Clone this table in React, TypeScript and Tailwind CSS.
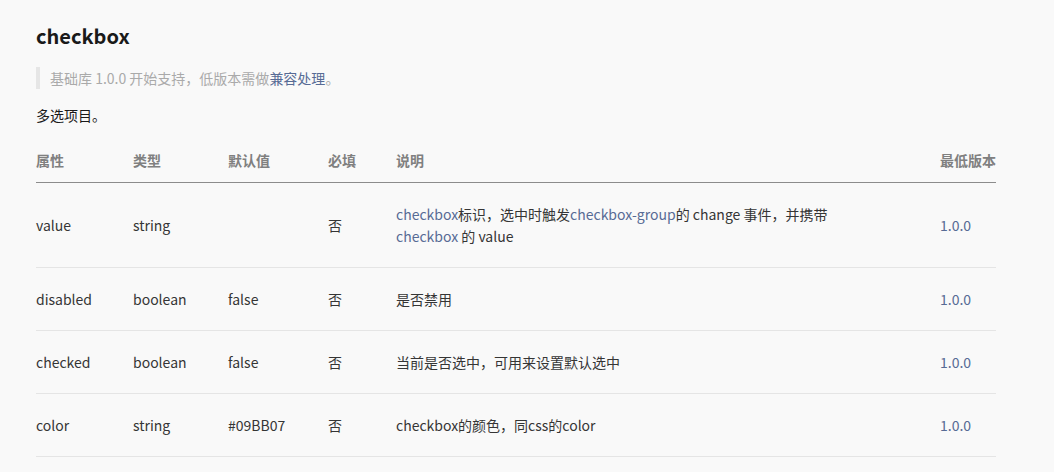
const font = { fontFamily: '"Noto Sans CJK SC", sans-serif' }

type Row = {
  name: string
  type: string
  def: string
  required: string
  desc: React.ReactNode
  version: string
}

const link = 'text-[#576b95]'

const rows: Row[] = [
  {
    name: 'value',
    type: 'string',
    def: '',
    required: '否',
    desc: (
      <>
        <span className={link}>checkbox</span>标识，选中时触发
        <span className={link}>checkbox-group</span>的 change 事件，并携带
        <br />
        <span className={link}>checkbox</span> 的 value
      </>
    ),
    version: '1.0.0',
  },
  { name: 'disabled', type: 'boolean', def: 'false', required: '否', desc: '是否禁用', version: '1.0.0' },
  {
    name: 'checked',
    type: 'boolean',
    def: 'false',
    required: '否',
    desc: '当前是否选中，可用来设置默认选中',
    version: '1.0.0',
  },
  {
    name: 'color',
    type: 'string',
    def: '#09BB07',
    required: '否',
    desc: 'checkbox的颜色，同css的color',
    version: '1.0.0',
  },
]

export default function App() {
  return (
    <div className="w-[1054px] h-[472px] overflow-hidden bg-[#f9f9f9] text-[#353535]" style={font}>
      <div className="pl-[36px] pr-[58px] pt-[21px]">
        <h1 className="text-[20px] font-bold leading-[30px] text-[#1a1a1a]">checkbox</h1>

        <div className="mt-[16px] border-l-[4px] border-[#e6e6e6] pl-[10px] text-[14px] leading-[22px] text-[#aaaaaa]">
          基础库 1.0.0 开始支持，低版本需做<span className="text-[#576b95]">兼容处理</span>。
        </div>

        <p className="mt-[15px] text-[14px] leading-[22px] text-[#1a1a1a]">多选项目。</p>

        <table className="mt-[23px] w-full border-collapse text-[14px] leading-[22px]">
          <thead>
            <tr className="border-b border-[#8c8c8c] text-left text-[#808080]">
              <th className="w-[97px] pb-[11px] font-bold">属性</th>
              <th className="w-[95px] pb-[11px] font-bold">类型</th>
              <th className="w-[100px] pb-[11px] font-bold">默认值</th>
              <th className="w-[68px] pb-[11px] font-bold">必填</th>
              <th className="pb-[11px] font-bold">说明</th>
              <th className="w-[56px] pb-[11px] font-bold">最低版本</th>
            </tr>
          </thead>
          <tbody>
            {rows.map((r) => (
              <tr key={r.name} className="border-b border-[#e5e5e5] align-middle">
                <td className="py-[20px]">{r.name}</td>
                <td className="py-[20px]">{r.type}</td>
                <td className="py-[20px]">{r.def}</td>
                <td className="py-[20px]">{r.required}</td>
                <td className="py-[20px]">{r.desc}</td>
                <td className="py-[20px] text-[#576b95]">{r.version}</td>
              </tr>
            ))}
          </tbody>
        </table>
      </div>
    </div>
  )
}
